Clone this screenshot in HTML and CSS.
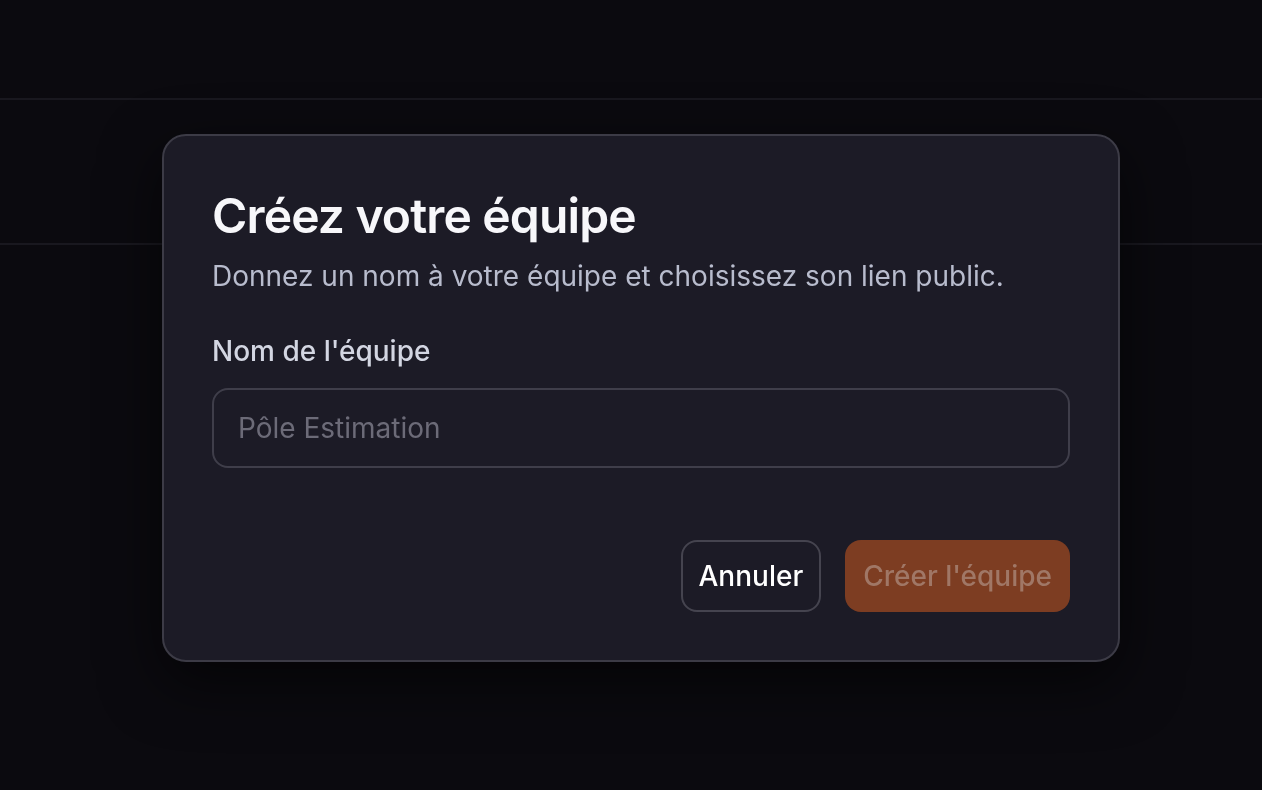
FILE: index.html
```html
<!DOCTYPE html>
<html lang="fr">
<head>
<meta charset="utf-8">
<title>Créez votre équipe</title>
<link rel="stylesheet" href="styles.css">
</head>
<body>
<div class="page">
  <header class="topbar"></header>
  <section class="band"></section>
</div>
<div class="overlay">
  <div class="dialog" role="dialog" aria-labelledby="dlg-title">
    <h2 id="dlg-title" class="dialog-title">Créez votre équipe</h2>
    <p class="dialog-desc">Donnez un nom à votre équipe et choisissez son lien public.</p>
    <label class="field-label" for="team-name">Nom de l'équipe</label>
    <input id="team-name" class="field-input" type="text" placeholder="Pôle Estimation">
    <div class="dialog-actions">
      <button class="btn btn-outline" type="button">Annuler</button>
      <button class="btn btn-primary" type="button" disabled>Créer l'équipe</button>
    </div>
  </div>
</div>
</body>
</html>
```

FILE: styles.css
```css
* { box-sizing: border-box; }
html, body {
  margin: 0;
  height: 100%;
  background: #0b0a0f;
  font-family: Inter, "Noto Sans", sans-serif;
  -webkit-font-smoothing: antialiased;
}
.page {
  display: flex;
  flex-direction: column;
}
.topbar {
  height: 100px;
  border-bottom: 2px solid #19181f;
}
.band {
  height: 145px;
  border-bottom: 2px solid #19181f;
}
.overlay {
  position: fixed;
  inset: 0;
  display: flex;
  justify-content: center;
  align-items: flex-start;
  padding-top: 134px;
  padding-left: 20px;
}
.dialog {
  width: 958px;
  background: #1c1b26;
  border: 2px solid #3c3b46;
  border-radius: 24px;
  padding: 48px;
  box-shadow: 0 20px 60px rgba(0, 0, 0, 0.6);
  display: flex;
  flex-direction: column;
}
.dialog-title {
  margin: 0;
  font-size: 48px;
  line-height: 64px;
  font-weight: 600;
  color: #f7f7fa;
  letter-spacing: -0.85px;
}
.dialog-desc {
  margin: 8px 0 0;
  font-size: 28px;
  line-height: 40px;
  color: #b8bccd;
}
.field-label {
  margin-top: 35px;
  font-size: 28px;
  line-height: 40px;
  font-weight: 500;
  color: #d3d6e2;
}
.field-input {
  margin-top: 17px;
  height: 80px;
  width: 100%;
  background: transparent;
  border: 2px solid #3f3e4a;
  border-radius: 16px;
  padding: 0 24px;
  font-family: inherit;
  font-size: 28px;
  color: #f0f0f4;
  outline: none;
}
.field-input::placeholder {
  color: #6c6b78;
}
.dialog-actions {
  margin-top: 72px;
  display: flex;
  justify-content: flex-end;
  gap: 24px;
}
.btn {
  height: 72px;
  padding: 0 16px;
  border-radius: 16px;
  font-family: inherit;
  font-size: 28px;
  font-weight: 500;
  border: 2px solid transparent;
}
.btn-outline {
  background: #1c1b26;
  border-color: #45444f;
  color: #ffffff;
}
.btn-primary {
  background: #7d3d22;
  color: #a07766;
}
```
